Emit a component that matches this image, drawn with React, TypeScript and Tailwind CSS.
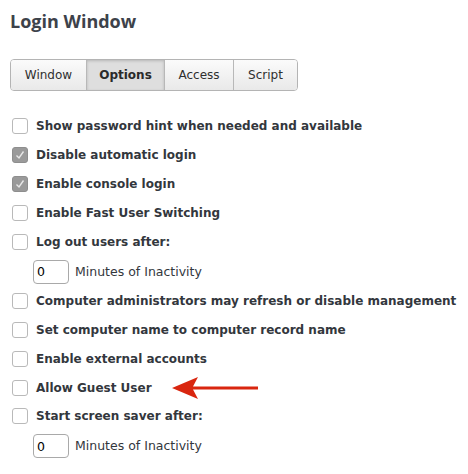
import { useState } from "react";

type Item = { label: string; checked?: boolean; minutes?: boolean };

const items: Item[] = [
  { label: "Show password hint when needed and available" },
  { label: "Disable automatic login", checked: true },
  { label: "Enable console login", checked: true },
  { label: "Enable Fast User Switching" },
  { label: "Log out users after:", minutes: true },
  { label: "Computer administrators may refresh or disable management" },
  { label: "Set computer name to computer record name" },
  { label: "Enable external accounts" },
  { label: "Allow Guest User" },
  { label: "Start screen saver after:", minutes: true },
];

const tabs = ["Window", "Options", "Access", "Script"];
const tabWidths = ["w-[75px]", "w-[78px]", "w-[69px]", "w-[64px]"];

export default function App() {
  const [tab, setTab] = useState("Options");
  const [state, setState] = useState(items.map((i) => !!i.checked));

  return (
    <div className="w-[468px] h-[474px] bg-white font-['DejaVu_Sans',sans-serif] text-[#32363c]">
      <h1 className="pl-[10px] pt-[9px] font-['Open_Sans',sans-serif] text-[18px] font-bold leading-[24px] text-[#3d424a]">
        Login Window
      </h1>

      <div className="ml-[10px] mt-[26px] flex h-[32px] w-fit rounded-[4px] border border-[#b4b4b4] overflow-hidden">
        {tabs.map((t, i) => (
          <button
            key={t}
            onClick={() => setTab(t)}
            className={`${tabWidths[i]} text-[12px] ${i > 0 ? "border-l border-[#b8b8b8]" : ""} ${
              tab === t
                ? "bg-[#dedede] font-bold shadow-[inset_0_1px_3px_rgba(0,0,0,0.18)] text-[#2a2a2a]"
                : "bg-gradient-to-b from-[#fbfbfb] to-[#e9e9e9] text-[#2f2f2f]"
            }`}
          >
            {t}
          </button>
        ))}
      </div>

      <div className="mt-[21px] flex flex-col pl-[12px]">
        {items.map((it, i) => (
          <div key={it.label}>
            <label className="flex h-[28.9px] items-center gap-[8px] cursor-pointer whitespace-nowrap">
              <Check
                checked={state[i]}
                onClick={() => setState((s) => s.map((v, j) => (j === i ? !v : v)))}
              />
              <span className="text-[12px] font-bold text-[#33373d]">{it.label}</span>
              {it.label === "Allow Guest User" && <Arrow />}
            </label>
            {it.minutes && (
              <div className="flex h-[30px] items-center gap-[6px] pl-[21px] pt-[1px]">
                <input
                  defaultValue="0"
                  className="h-[24px] w-[36px] rounded-[4px] border border-[#a9a9a9] px-[3px] text-[12.5px] text-black outline-none"
                />
                <span className="text-[12.5px] text-[#33373d]">Minutes of Inactivity</span>
              </div>
            )}
          </div>
        ))}
      </div>
    </div>
  );
}

function Check({ checked, onClick }: { checked: boolean; onClick: () => void }) {
  return (
    <span
      onClick={onClick}
      className={`flex h-[16px] w-[16px] shrink-0 items-center justify-center rounded-[3px] border ${
        checked ? "border-[#8e8e8e] bg-[#9a9a9a]" : "border-[#b9b9b9] bg-white"
      }`}
    >
      {checked && (
        <svg width="10" height="10" viewBox="0 0 10 10">
          <path d="M1.5 5.5 L4 8 L8.5 1.5" fill="none" stroke="#e8e8e8" strokeWidth="1.4" />
        </svg>
      )}
    </span>
  );
}

function Arrow() {
  return (
    <svg width="86" height="24" viewBox="0 0 86 24" className="ml-[12px]">
      <path d="M0 12 L26 1 L21 10.5 L86 10.5 L86 13.5 L21 13.5 L26 23 Z" fill="#d9260f" />
    </svg>
  );
}
